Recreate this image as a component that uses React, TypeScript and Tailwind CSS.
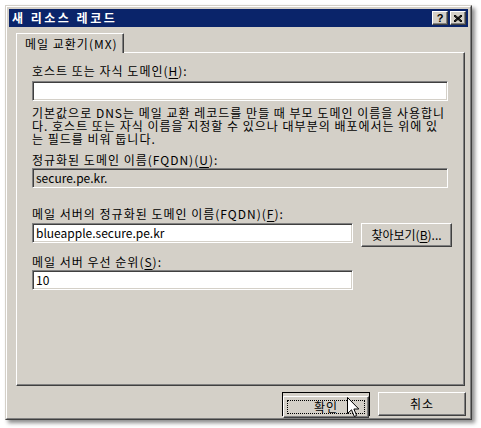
import React from 'react';

const sunken =
  'border border-t-[#808080] border-l-[#808080] border-r-white border-b-white shadow-[inset_1px_1px_0_#404040,inset_-1px_-1px_0_#d4d0c8]';
const raised =
  'border border-t-white border-l-white border-r-[#404040] border-b-[#404040] shadow-[inset_-1px_-1px_0_#808080]';

const Field: React.FC<{ value?: string; width: string; readOnly?: boolean }> = ({ value = '', width, readOnly }) => (
  <div className={`${sunken} ${width} h-[20px] ${readOnly ? 'bg-[#d4d0c8]' : 'bg-white'} flex items-center pl-[3px] text-[12px] leading-[14px] whitespace-nowrap`}>
    {value}
  </div>
);

const Label: React.FC<{ children: React.ReactNode; className?: string }> = ({ children, className = '' }) => (
  <div className={`text-[12px] leading-[14px] tracking-[1px] whitespace-nowrap ${className}`}>{children}</div>
);

const Key: React.FC<{ k: string }> = ({ k }) => <span className="underline underline-offset-2">{k}</span>;

const Cursor = () => (
  <svg className="absolute left-[347px] top-[397px]" width="13" height="21" viewBox="0 0 13 21">
    <path d="M0.5 0.5 L0.5 16.5 L4.5 12.8 L7.3 19.5 L9.6 18.5 L6.9 12 L11.8 12 Z" fill="#fff" stroke="#000" strokeWidth="1" />
  </svg>
);

export default function App() {
  return (
    <div className="relative w-[481px] h-[428px] bg-white font-['Noto_Sans_CJK_KR','Noto_Sans',sans-serif] text-black">
      <div className="absolute left-[5px] top-[5px] w-[467px] h-[415px] bg-[#d4d0c8] border border-t-[#d4d0c8] border-l-[#d4d0c8] border-r-[#404040] border-b-[#404040] shadow-[3px_3px_4px_rgba(0,0,0,0.45)]">
        <div className="w-full h-full border border-t-white border-l-white border-r-[#808080] border-b-[#808080] p-[2px] flex flex-col">
          {/* title bar */}
          <div className="h-[18px] bg-[#0a246a] flex items-center justify-between pl-[3px] pr-[2px]">
            <span className="text-white font-bold text-[12px] leading-[14px] tracking-[2.5px]">새 리소스 레코드</span>
            <div className="flex">
              <div className={`${raised} w-[16px] h-[14px] bg-[#d4d0c8] flex items-center justify-center text-[11px] font-bold leading-none font-['Liberation_Sans',sans-serif]`}>?</div>
              <div className={`${raised} ml-[2px] w-[16px] h-[14px] bg-[#d4d0c8] flex items-center justify-center`}>
                <svg width="8" height="7" viewBox="0 0 8 7">
                  <path d="M0 0 L8 7 M1 0 L8 6 M0 1 L7 7 M8 0 L0 7 M7 0 L0 6 M8 1 L1 7" stroke="#000" strokeWidth="1" fill="none" />
                </svg>
              </div>
            </div>
          </div>

          {/* tab */}
          <div className="ml-[7px] mt-[6px] flex">
            <div className="relative z-10 -mb-[1px] h-[20px] w-[108px] bg-[#d4d0c8] border-t border-l border-t-white border-l-white border-r border-r-[#404040] shadow-[inset_-1px_0_0_#808080] rounded-tr-[1px] flex items-center pl-[8px] text-[12px] leading-[14px] tracking-[1px] whitespace-nowrap">
              메일 교환기(MX)
            </div>
          </div>

          {/* panel */}
          <div className="ml-[7px] w-[449px] h-[334px] border border-t-white border-l-white border-r-[#404040] border-b-[#404040] shadow-[inset_-1px_-1px_0_#808080] pl-[15px] flex flex-col">
            <Label className="mt-[11px]">
              호스트 또는 자식 도메인(<Key k="H" />):
            </Label>
            <div className="mt-[3px]">
              <Field width="w-[416px]" />
            </div>
            <div className="mt-[5px] text-[12px] leading-[13px] tracking-[1px] whitespace-nowrap">
              <div>기본값으로 DNS는 메일 교환 레코드를 만들 때 부모 도메인 이름을 사용합니</div>
              <div>다. 호스트 또는 자식 이름을 지정할 수 있으나 대부분의 배포에서는 위에 있</div>
              <div>는 필드를 비워 둡니다.</div>
            </div>
            <Label className="mt-[8px]">
              정규화된 도메인 이름(FQDN)(<Key k="U" />):
            </Label>
            <div className="mt-[1px]">
              <Field width="w-[416px]" value="secure.pe.kr." readOnly />
            </div>
            <Label className="mt-[19px]">
              메일 서버의 정규화된 도메인 이름(FQDN)(<Key k="F" />):
            </Label>
            <div className="mt-[2px] flex items-start">
              <Field width="w-[321px]" value="blueapple.secure.pe.kr" />
              <button className={`${raised} ml-[8px] w-[91px] h-[24px] bg-[#d4d0c8] text-[12px] leading-[14px] whitespace-nowrap`}>
                찾아보기(<Key k="B" />)...
              </button>
            </div>
            <Label className="mt-[8px]">
              메일 서버 우선 순위(<Key k="S" />):
            </Label>
            <div className="mt-[1px]">
              <Field width="w-[321px]" value="10" />
            </div>
          </div>

          {/* buttons */}
          <div className="mt-[6px] flex justify-end pr-[2px] gap-[8px]">
            <div className="w-[88px] h-[24px] border border-black">
              <button className={`${raised} w-full h-full bg-[#d4d0c8] p-[3px]`}>
                <div className="w-full h-full border border-dotted border-black flex items-center justify-center text-[12px] leading-[14px] tracking-[1px]">
                  확인
                </div>
              </button>
            </div>
            <button className={`${raised} w-[88px] h-[24px] bg-[#d4d0c8] text-[12px] leading-[14px] tracking-[1px]`}>취소</button>
          </div>
        </div>
      </div>
      <Cursor />
    </div>
  );
}
